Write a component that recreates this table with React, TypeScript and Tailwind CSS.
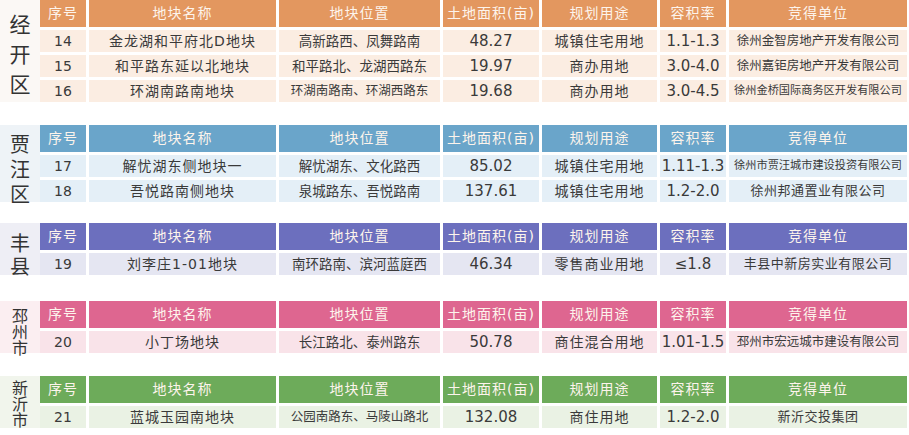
import React from "react";

type Row = {
  no: string;
  name: string;
  place: string;
  area: string;
  use: string;
  ratio: string;
  winner: string;
  placeSize?: string;
  winnerSize?: string;
};

type Section = {
  label: string[];
  labelSize: string;
  mt: string;
  side: string;
  head: string;
  cell: string;
  rows: Row[];
};

const sections: Section[] = [
  {
    label: ["经", "开", "区"],
    labelSize: "h-[102px] text-[21px] leading-[30px] pt-[10px]",
    mt: "mt-0",
    side: "bg-[#fbf8f5]",
    head: "bg-[#e3975f]",
    cell: "bg-[#fbede2]",
    rows: [
      { no: "14", name: "金龙湖和平府北D地块", place: "高新路西、凤舞路南", area: "48.27", use: "城镇住宅用地", ratio: "1.1-1.3", winner: "徐州金智房地产开发有限公司", winnerSize: "text-[12.5px]" },
      { no: "15", name: "和平路东延以北地块", place: "和平路北、龙湖西路东", area: "19.97", use: "商办用地", ratio: "3.0-4.0", winner: "徐州嘉钜房地产开发有限公司", winnerSize: "text-[12.5px]" },
      { no: "16", name: "环湖南路南地块", place: "环湖南路南、环湖西路东", area: "19.68", use: "商办用地", ratio: "3.0-4.5", winner: "徐州金桥国际商务区开发有限公司", placeSize: "text-[12.5px]", winnerSize: "text-[11.2px]" },
    ],
  },
  {
    label: ["贾", "汪", "区"],
    labelSize: "h-[77px] text-[20px] leading-[25px] pt-[8px]",
    mt: "mt-[23px]",
    side: "bg-[#eef3f7]",
    head: "bg-[#6aa5ca]",
    cell: "bg-[#e4eff7]",
    rows: [
      { no: "17", name: "解忧湖东侧地块一", place: "解忧湖东、文化路西", area: "85.02", use: "城镇住宅用地", ratio: "1.11-1.3", winner: "徐州市贾汪城市建设投资有限公司", winnerSize: "text-[11.2px]" },
      { no: "18", name: "吾悦路南侧地块", place: "泉城路东、吾悦路南", area: "137.61", use: "城镇住宅用地", ratio: "1.2-2.0", winner: "徐州邦通置业有限公司" },
    ],
  },
  {
    label: ["丰", "县"],
    labelSize: "h-[52px] text-[20px] leading-[23px] pt-[10px]",
    mt: "mt-[21px]",
    side: "bg-[#eeeef5]",
    head: "bg-[#6c6fbe]",
    cell: "bg-[#e5e6f2]",
    rows: [
      { no: "19", name: "刘李庄1-01地块", place: "南环路南、滨河蓝庭西", area: "46.34", use: "零售商业用地", ratio: "≤1.8", winner: "丰县中新房实业有限公司" },
    ],
  },
  {
    label: ["邳", "州", "市"],
    labelSize: "h-[52px] text-[16px] leading-[16px] pt-[8px]",
    mt: "mt-[26px]",
    side: "bg-[#fbeef1]",
    head: "bg-[#de6690]",
    cell: "bg-[#f9e3e9]",
    rows: [
      { no: "20", name: "小丁场地块", place: "长江路北、泰州路东", area: "50.78", use: "商住混合用地", ratio: "1.01-1.5", winner: "邳州市宏远城市建设有限公司", winnerSize: "text-[12.5px]" },
    ],
  },
  {
    label: ["新", "沂", "市"],
    labelSize: "h-[52px] text-[16px] leading-[16px] pt-[5px]",
    mt: "mt-[23px]",
    side: "bg-[#f1f5ec]",
    head: "bg-[#6dab5a]",
    cell: "bg-[#eaf2e4]",
    rows: [
      { no: "21", name: "蓝城玉园南地块", place: "公园南路东、马陵山路北", area: "132.08", use: "商住用地", ratio: "1.2-2.0", winner: "新沂交投集团", placeSize: "text-[12.5px]" },
    ],
  },
];

const heads = ["序号", "地块名称", "地块位置", "土地面积(亩)", "规划用途", "容积率", "竞得单位"];

const grid = "grid grid-cols-[46px_187px_161px_96px_115px_66px_178px] gap-[3px]";

function Block({ s }: { s: Section }) {
  return (
    <div className={`flex items-start ${s.mt}`}>
      <div className={`w-[40px] flex flex-col items-center overflow-visible text-[#333] ${s.side} ${s.labelSize}`}>
        {s.label.map((c) => (
          <span key={c}>{c}</span>
        ))}
      </div>
      <div className="flex flex-col gap-[3px]">
        <div className={grid}>
          {heads.map((h) => (
            <div
              key={h}
              className={`h-[27px] flex items-center justify-center text-[14px] tracking-[1px] text-[#fdf4ec] ${s.head}`}
            >
              {h}
            </div>
          ))}
        </div>
        {s.rows.map((r) => (
          <div key={r.no} className={`${grid} text-[#3a3a3a]`}>
            <div className={`h-[22px] flex items-center justify-center text-[14px] ${s.cell}`}>{r.no}</div>
            <div className={`h-[22px] flex items-center justify-center text-[14px] tracking-[1px] ${s.cell}`}>{r.name}</div>
            <div className={`h-[22px] flex items-center justify-center whitespace-nowrap ${r.placeSize ?? "text-[13.5px]"} ${s.cell}`}>{r.place}</div>
            <div className={`h-[22px] flex items-center justify-center text-[15px] ${s.cell}`}>{r.area}</div>
            <div className={`h-[22px] flex items-center justify-center text-[14px] tracking-[1px] ${s.cell}`}>{r.use}</div>
            <div className={`h-[22px] flex items-center justify-center text-[15px] whitespace-nowrap ${s.cell}`}>{r.ratio}</div>
            <div className={`h-[22px] flex items-center justify-center whitespace-nowrap ${r.winnerSize ?? "text-[13px] tracking-[0.5px]"} ${s.cell}`}>{r.winner}</div>
          </div>
        ))}
      </div>
    </div>
  );
}

export default function App() {
  return (
    <div className="w-[909px] h-[435px] bg-white overflow-hidden font-['DejaVu_Sans','Noto_Sans_CJK_SC',sans-serif]">
      {sections.map((s) => (
        <Block key={s.label.join("")} s={s} />
      ))}
    </div>
  );
}
